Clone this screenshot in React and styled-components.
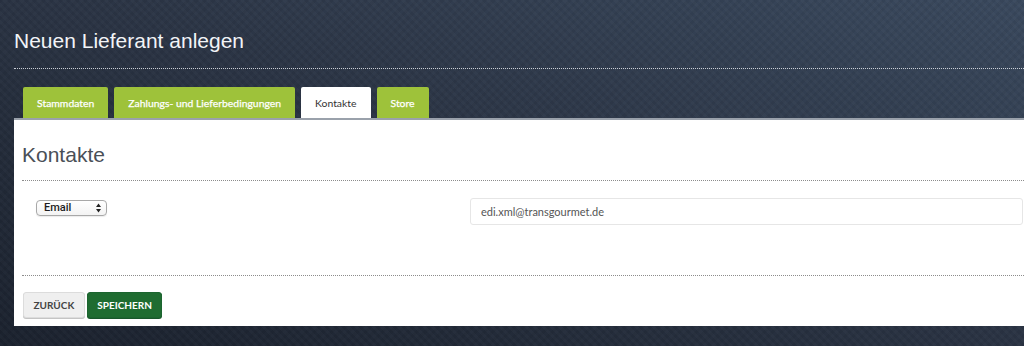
import React from 'react'
import styled, { createGlobalStyle } from 'styled-components'

const GlobalStyle = createGlobalStyle`
    html, body {
        margin: 0;
        padding: 0;
        min-height: 100%;
    }
    body {
        font-family: Lato, "Liberation Sans", sans-serif;
        background-color: #273041;
        background-image:
            repeating-linear-gradient(45deg, rgba(255,255,255,0.018) 0 3px, transparent 3px 6px),
            repeating-linear-gradient(-45deg, rgba(0,0,0,0.05) 0 3px, transparent 3px 6px),
            linear-gradient(to top right, #1b222e 0%, #2a3343 50%, #3a495e 100%);
        background-attachment: fixed;
        min-height: 346px;
    }
`

const Page = styled.div`
    padding-left: 14px;
    overflow: hidden;
`

const Title = styled.h1`
    margin: 0;
    padding-top: 28px;
    padding-bottom: 14px;
    font-family: "Liberation Sans", Arial, sans-serif;
    font-weight: normal;
    font-size: 21px;
    line-height: 26px;
    color: #f2f4f7;
    border-bottom: 1px dotted rgba(230,234,240,0.85);
`

const TabBar = styled.nav`
    display: flex;
    gap: 6px;
    margin-top: 18px;
    padding-left: 9px;
`

const Tab = styled.div`
    height: 31px;
    line-height: 32px;
    padding: 0 14px;
    border-radius: 2px 2px 0 0;
    font-size: 10.4px;
    color: ${p => p.active ? '#333' : '#fff'};
    background: ${p => p.active ? '#fff' : '#9ec23a'};
    font-weight: normal;
    -webkit-text-stroke: ${p => p.active ? '0' : '0.25px #fff'};
    white-space: nowrap;
`

const Panel = styled.section`
    background: #fff;
    border-top: 2px solid #9aa1ab;
    padding: 0 0 8px 8px;
`

const PanelTitle = styled.h2`
    margin: 0;
    padding: 23px 0 13px;
    font-family: "Liberation Sans", Arial, sans-serif;
    font-weight: normal;
    font-size: 21px;
    line-height: 24px;
    color: #4a4f57;
    border-bottom: 1px dotted #8c8c8c;
`

const ContactRow = styled.div`
    display: grid;
    grid-template-columns: 448px 1fr;
    align-items: start;
    padding: 17px 1px 50px 0;
    border-bottom: 1px dotted #8c8c8c;
`

const SelectWrap = styled.div`
    position: relative;
    width: 71px;
    height: 17px;
    margin: 2px 0 0 14px;
`

const TypeSelect = styled.select`
    display: block;
    appearance: none;
    -webkit-appearance: none;
    width: 71px;
    height: 16px;
    padding: 0 0 0 7px;
    border: 1px solid #a8a8a8;
    border-radius: 4px;
    background: linear-gradient(#ffffff, #f3f3f3);
    font-family: Roboto, "Liberation Sans", sans-serif;
    font-weight: 500;
    font-size: 11px;
    line-height: 14px;
    color: #1e1e1e;
    box-shadow: 0 1px 1px rgba(0,0,0,0.08);
`

const Arrows = styled.svg`
    display: block;
    position: absolute;
    right: 6px;
    top: 3px;
    pointer-events: none;
`

const EmailInput = styled.input`
    box-sizing: border-box;
    width: 100%;
    height: 27px;
    padding: 0 10px;
    border: 1px solid #e6e6e6;
    border-radius: 3px;
    font-family: Lato, "Liberation Sans", sans-serif;
    font-size: 11px;
    color: #555;
    outline: none;
`

const Actions = styled.div`
    display: flex;
    gap: 2px;
    padding: 16px 0 0 1px;
`

const Button = styled.button`
    height: 26px;
    padding: 0 9.5px;
    border-radius: 3px;
    border: 1px solid ${p => p.primary ? '#1c6530' : '#dcdcdc'};
    box-shadow: 0 1px 0 ${p => p.primary ? '#18572a' : '#c4c4c4'};
    background: ${p => p.primary ? '#1f6c31' : '#efefef'};
    color: ${p => p.primary ? '#fff' : '#444'};
    font-family: Lato, "Liberation Sans", sans-serif;
    font-weight: bold;
    font-size: 10px;
    text-transform: uppercase;
    cursor: pointer;
`

export default function App () {
    return <>
        <GlobalStyle />
        <Page>
            <Title>Neuen Lieferant anlegen</Title>
            <TabBar>
                <Tab>Stammdaten</Tab>
                <Tab>Zahlungs- und Lieferbedingungen</Tab>
                <Tab active>Kontakte</Tab>
                <Tab>Store</Tab>
            </TabBar>
            <Panel>
                <PanelTitle>Kontakte</PanelTitle>
                <ContactRow>
                    <SelectWrap>
                        <TypeSelect defaultValue="email">
                            <option value="email">Email</option>
                            <option value="phone">Telefon</option>
                            <option value="fax">Fax</option>
                        </TypeSelect>
                        <Arrows width="5" height="10" viewBox="0 0 5 10">
                            <path d="M2.5 0.5 L5 4 L0 4 Z M2.5 9.5 L5 6 L0 6 Z" fill="#222" />
                        </Arrows>
                    </SelectWrap>
                    <EmailInput defaultValue="edi.xml@transgourmet.de" />
                </ContactRow>
                <Actions>
                    <Button>Zurück</Button>
                    <Button primary>Speichern</Button>
                </Actions>
            </Panel>
        </Page>
    </>
}
